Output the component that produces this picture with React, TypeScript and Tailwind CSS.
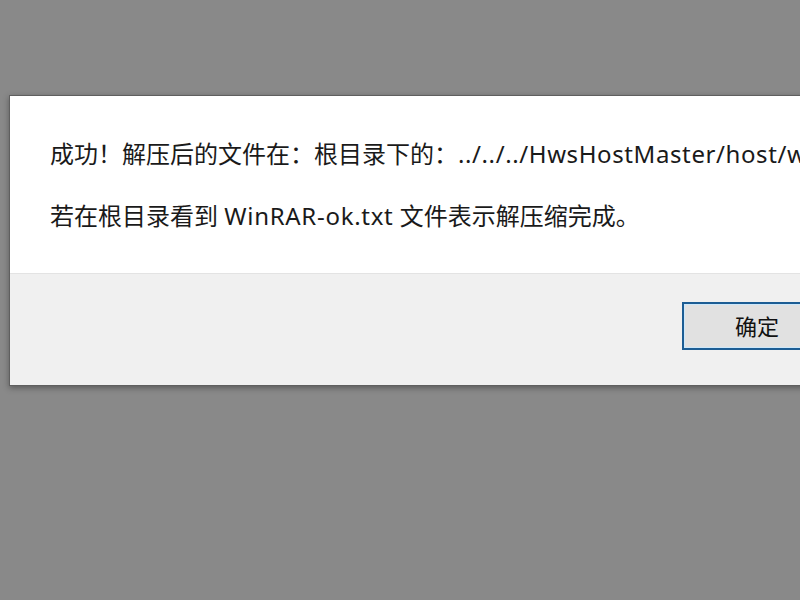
export default function App() {
  return (
    <main className="h-[600px] w-[800px] overflow-hidden bg-[#898989] pt-[95px] pl-[9px] font-['Noto_Sans','Noto_Sans_CJK_SC',sans-serif]">
      <div className="w-[900px] border border-[#5f5f5f] bg-white shadow-[0_2px_6px_rgba(0,0,0,0.35)]">
        <section className="h-[177px] pl-[40px] pt-[42px] text-[24px] leading-[32px] text-[#1a1a1a]">
          <p className="whitespace-nowrap">
            成功！解压后的文件在：根目录下的：<span className="tracking-[0.6px]">../../../HwsHostMaster/host/web/</span>
          </p>
          <p className="mt-[30px] whitespace-nowrap">
            若在根目录看到 <span className="tracking-[0.7px]">WinRAR-ok.txt</span> 文件表示解压缩完成。
          </p>
        </section>
        <footer className="h-[112px] border-t border-[#e3e3e3] bg-[#f0f0f0] pl-[672px] pt-[28px]">
          <button className="flex h-[48px] w-[150px] items-center justify-center border-2 border-[#1c5d94] bg-[#e1e1e1] text-[22px] text-[#111] shadow-[inset_0_0_0_1px_#cde8fb]">
            确定
          </button>
        </footer>
      </div>
    </main>
  );
}
